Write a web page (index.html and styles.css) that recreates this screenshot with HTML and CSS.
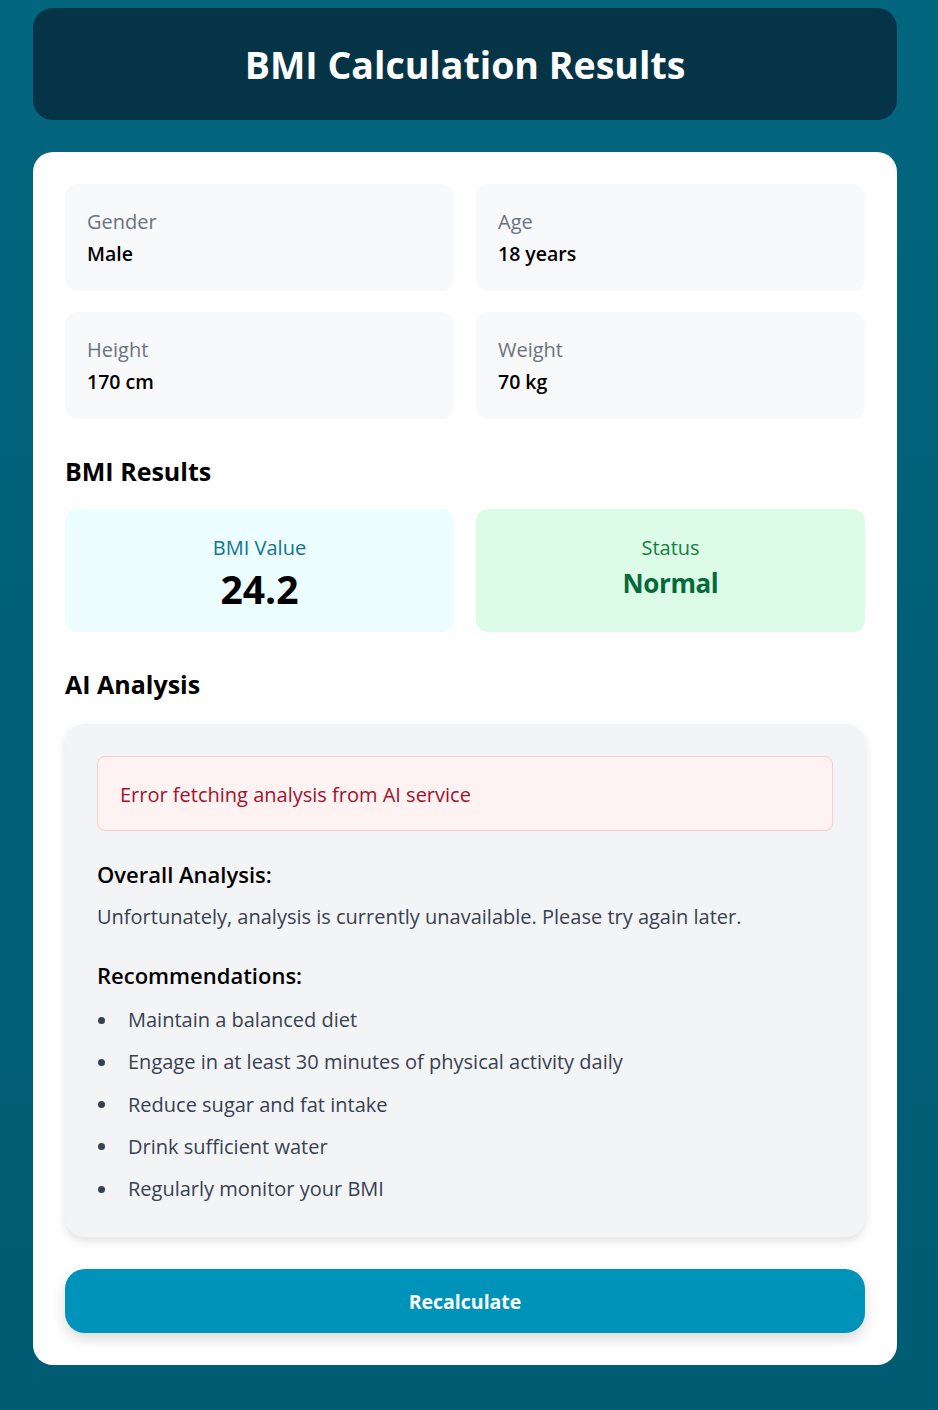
FILE: index.html
```html
<!DOCTYPE html>
<html lang="en">
<head>
<meta charset="utf-8">
<title>BMI Calculation Results</title>
<link rel="stylesheet" href="styles.css">
</head>
<body>
<div class="page">
  <header class="hero">
    <h1 class="hero-title">BMI Calculation Results</h1>
  </header>
  <main class="card">
    <section class="info-grid">
      <div class="info-box"><div class="info-label">Gender</div><div class="info-value">Male</div></div>
      <div class="info-box"><div class="info-label">Age</div><div class="info-value">18 years</div></div>
      <div class="info-box"><div class="info-label">Height</div><div class="info-value">170 cm</div></div>
      <div class="info-box"><div class="info-label">Weight</div><div class="info-value">70 kg</div></div>
    </section>

    <h2 class="section-title">BMI Results</h2>
    <section class="result-grid">
      <div class="result-box result-bmi">
        <div class="result-label">BMI Value</div>
        <div class="result-value">24.2</div>
      </div>
      <div class="result-box result-status">
        <div class="result-label">Status</div>
        <div class="status-value">Normal</div>
      </div>
    </section>

    <h2 class="section-title">AI Analysis</h2>
    <section class="analysis">
      <div class="error-box">Error fetching analysis from AI service</div>
      <h3 class="sub-title first">Overall Analysis:</h3>
      <p class="analysis-text">Unfortunately, analysis is currently unavailable. Please try again later.</p>
      <h3 class="sub-title">Recommendations:</h3>
      <ul class="rec-list">
        <li>Maintain a balanced diet</li>
        <li>Engage in at least 30 minutes of physical activity daily</li>
        <li>Reduce sugar and fat intake</li>
        <li>Drink sufficient water</li>
        <li>Regularly monitor your BMI</li>
      </ul>
    </section>

    <button class="recalc" type="button">Recalculate</button>
  </main>
</div>
</body>
</html>
```

FILE: styles.css
```css
* { box-sizing: border-box; }

html, body {
  margin: 0;
  padding: 0;
}

body {
  min-height: 1410px;
  background: linear-gradient(180deg, #03667f 0%, #005f77 50%, #005c73 100%);
  font-family: "Open Sans", "Noto Sans", sans-serif;
  color: #000;
}

.page {
  width: 864px;
  margin-left: 33px;
  padding-top: 8px;
  padding-bottom: 45px;
}

.hero {
  background: #053447;
  border-radius: 20px;
  padding: 33px 0 31px;
  text-align: center;
}

.hero-title {
  margin: 0;
  color: #fff;
  font-size: 37.5px;
  line-height: 48px;
  font-weight: 700;
}

.card {
  margin-top: 32px;
  background: #fff;
  border-radius: 20px;
  padding: 32px;
}

.info-grid {
  display: grid;
  grid-template-columns: 1fr 1fr;
  column-gap: 22px;
  row-gap: 21px;
}

.info-box {
  background: #f8f9fb;
  border-radius: 12px;
  padding: 22px 22px 21px;
}

.info-label {
  color: #6b7280;
  font-size: 20px;
  line-height: 32px;
}

.info-value {
  font-size: 19.5px;
  line-height: 32px;
  font-weight: 600;
}

.section-title {
  margin: 34px 0 20px;
  font-size: 25px;
  line-height: 36px;
  font-weight: 700;
}

.result-grid {
  display: grid;
  grid-template-columns: 1fr 1fr;
  column-gap: 22px;
  margin-bottom: 34px;
}

.result-grid + .section-title { margin-top: 0; margin-bottom: 22px; }

.result-box {
  border-radius: 12px;
  padding: 24px 16px 17px;
  text-align: center;
}

.result-bmi { background: #ecfeff; }
.result-status { background: #dcfce7; }

.result-label {
  font-size: 20px;
  line-height: 30px;
}

.result-bmi .result-label { color: #0e7490; }
.result-status .result-label { color: #15803d; }

.result-value {
  font-size: 39px;
  line-height: 52px;
  font-weight: 700;
}

.status-value {
  font-size: 26px;
  line-height: 40px;
  font-weight: 700;
  color: #05693a;
  letter-spacing: -0.4px;
}

.analysis {
  background: #f3f4f6;
  border-radius: 20px;
  padding: 32px;
  box-shadow: 0 4px 10px rgba(0, 0, 0, 0.12);
}

.error-box {
  background: #fef2f2;
  border: 1px solid #fecaca;
  border-radius: 8px;
  padding: 22px 22px 19px;
  color: #a1122c;
  font-size: 20px;
  line-height: 32px;
}

.sub-title {
  margin: 11px 0 0;
  font-size: 22px;
  line-height: 32px;
  font-weight: 600;
}

.sub-title.first { margin-top: 27px; }

.analysis-text {
  margin: 11px 0 26px;
  color: #374151;
  font-size: 20px;
  line-height: 32px;
}

.rec-list {
  margin: 13px 0 0;
  padding: 0;
  list-style: none;
  color: #374151;
  font-size: 20px;
  line-height: 32px;
}

.rec-list li {
  display: flex;
  align-items: center;
}

.rec-list li::before {
  content: "";
  flex: none;
  width: 7px;
  height: 7px;
  border-radius: 50%;
  background: #374151;
  margin: 0 23px 0 1px;
}

.rec-list li + li { margin-top: 10.25px; }

.recalc {
  display: block;
  width: 100%;
  margin-top: 32px;
  height: 64px;
  border: none;
  border-radius: 20px;
  background: #0093ba;
  color: #fff;
  font-family: inherit;
  font-size: 19.5px;
  font-weight: 700;
  box-shadow: 0 6px 14px rgba(0, 0, 0, 0.15);
}
```
